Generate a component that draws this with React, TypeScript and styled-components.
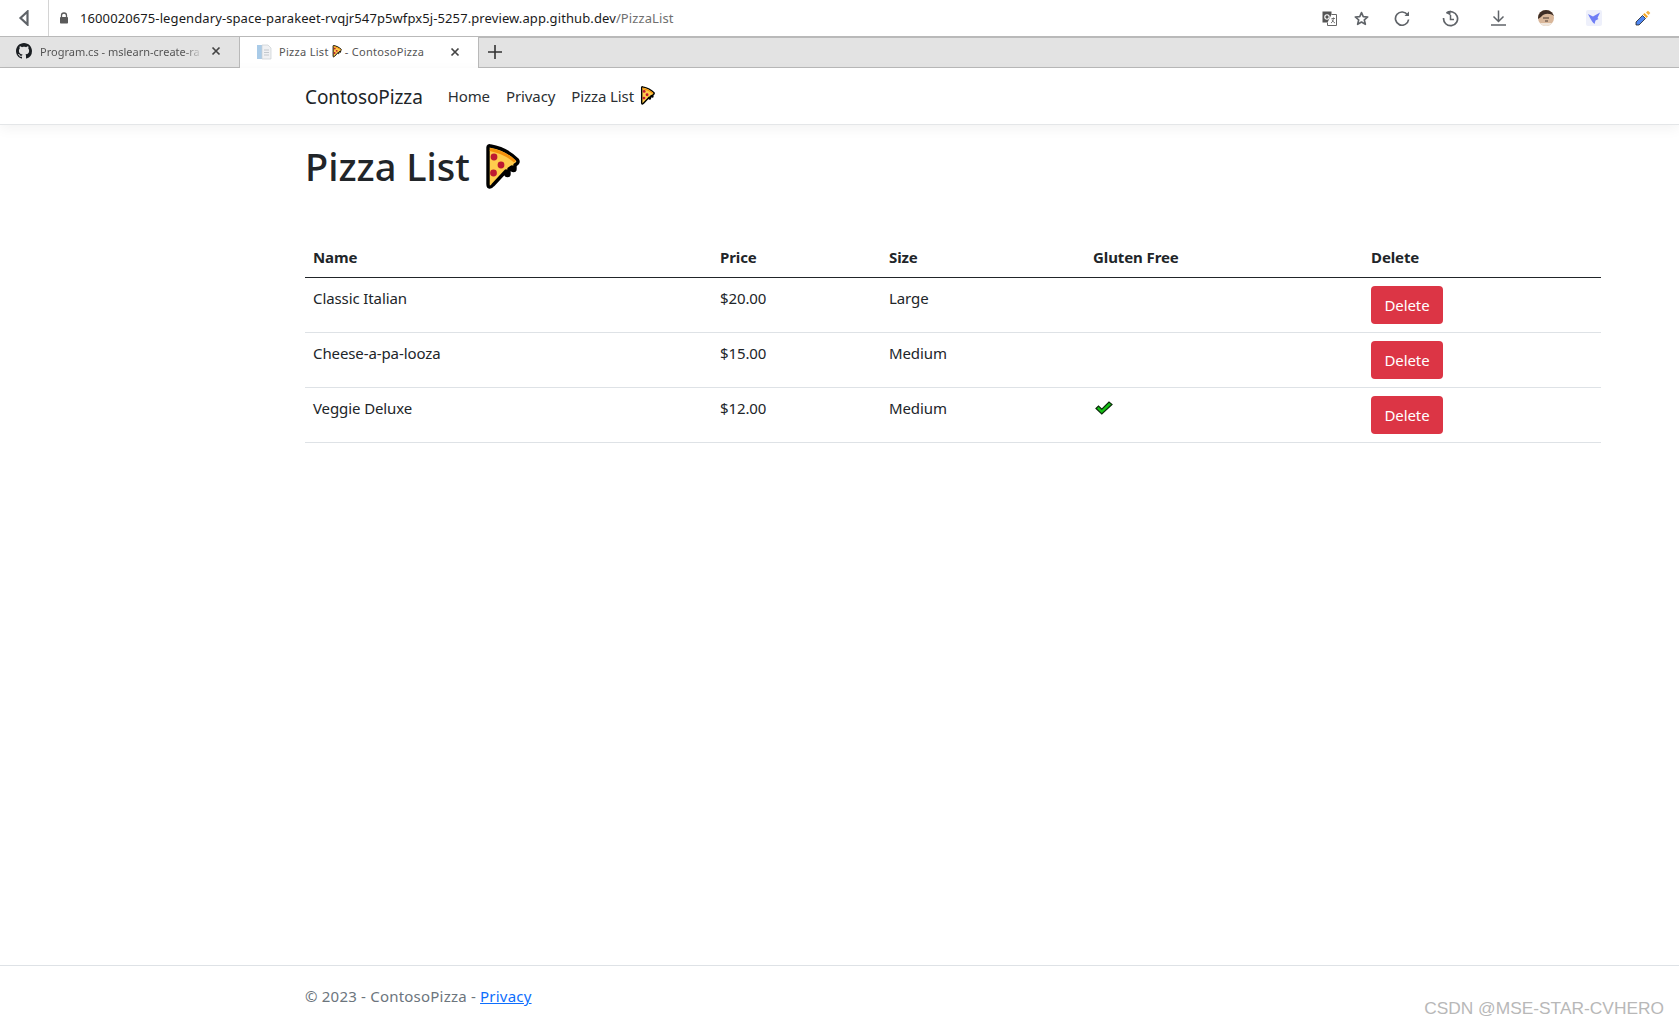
import React from "react";
import styled, { createGlobalStyle } from "styled-components";

const Global = createGlobalStyle`
  html, body { margin: 0; padding: 0; background: #fff; }
  body { font-family: "Noto Sans", "Open Sans", "Liberation Sans", sans-serif; color: #212529; }
  * { box-sizing: border-box; }
`;

const Page = styled.div`
  position: relative;
  display: flex;
  flex-direction: column;
  height: 1026px;
  overflow: hidden;
`;

const AddressBar = styled.div`
  display: flex;
  align-items: center;
  height: 36px;
  background: #fff;
`;
const BackCell = styled.div`
  width: 49px;
  height: 36px;
  display: flex;
  align-items: center;
  justify-content: center;
  border-right: 1px solid #d4d4d4;
  padding-right: 1px;
`;
const Lock = styled.div`
  display: flex;
  margin: 0 11px 0 10px;
`;
const Url = styled.div`
  flex: 1;
  font-size: 13px;
  letter-spacing: 0.1px;
  color: #1a1a1a;
  white-space: nowrap;
  span { color: #6f6f6f; }
`;
const ToolIcons = styled.div`
  display: flex;
  align-items: center;
  height: 36px;
`;
const ToolSlot = styled.div<{ $w: number }>`
  width: ${(p) => p.$w}px;
  display: flex;
  justify-content: center;
  align-items: center;
`;

const TabBar = styled.div`
  display: flex;
  align-items: stretch;
  height: 32px;
  background: #e3e3e3;
  border-top: 2px solid #b9b9b9;
  border-bottom: 1px solid #b9b9b9;
`;
const Tab = styled.div<{ $active?: boolean; $w: number }>`
  width: ${(p) => p.$w}px;
  display: flex;
  align-items: center;
  padding: 0 0 2px 16px;
  background: ${(p) => (p.$active ? "#fff" : "#e3e3e3")};
  border-right: 1px solid #b9b9b9;
  margin-bottom: ${(p) => (p.$active ? "-1px" : "0")};
  margin-top: -1px;
`;
const TabLabel = styled.div<{ $fade?: boolean }>`
  width: 163px;
  margin-left: ${(p) => (p.$fade ? 8 : 7)}px;
  font-size: 11px;
  letter-spacing: ${(p) => (p.$fade ? 0 : 0.3)}px;
  color: #555;
  white-space: nowrap;
  display: flex;
  align-items: center;
  gap: 3px;
  ${(p) => (p.$fade ? "mask-image: linear-gradient(90deg,#000 88%,transparent);" : "")}
`;
const TabClose = styled.div`
  margin-left: 8px;
  display: flex;
`;
const NewTab = styled.div`
  width: 32px;
  display: flex;
  align-items: center;
  justify-content: center;
  padding-bottom: 2px;
`;

const Nav = styled.nav`
  display: flex;
  align-items: center;
  height: 57px;
  padding-left: 305px;
  background: #fff;
  border-bottom: 1px solid #e4e6e8;
  box-shadow: 0 4px 12px rgba(0, 0, 0, 0.05);
`;
const Brand = styled.a`
  font-size: 19px;
  letter-spacing: -0.12px;
  color: #212529;
  margin-right: 25px;
  padding-top: 1px;
`;
const NavLink = styled.a`
  display: flex;
  align-items: center;
  font-size: 15px;
  letter-spacing: -0.1px;
  color: #2b2f33;
  margin-right: 16px;
  gap: 6px;
`;

const Main = styled.main`
  flex: 1;
  padding: 14px 78px 0 305px;
`;
const Title = styled.h1`
  display: flex;
  align-items: center;
  gap: 14px;
  margin: 0 0 44px;
  height: 54px;
  font-size: 38px;
  font-weight: 500;
  letter-spacing: 0;
  color: #212529;
  svg { margin-top: 2px; }
`;
const Table = styled.table`
  width: 1296px;
  border-collapse: collapse;
  table-layout: fixed;
`;
const Th = styled.th`
  padding: 8px;
  height: 40px;
  font-size: 15px;
  font-weight: 700;
  letter-spacing: -0.1px;
  line-height: 24px;
  text-align: left;
  color: #212529;
  border-bottom: 1px solid #212529;
`;
const Td = styled.td`
  padding: 8px;
  height: 55px;
  font-size: 15px;
  letter-spacing: -0.1px;
  line-height: 24px;
  vertical-align: top;
  color: #212529;
  border-bottom: 1px solid #dee2e6;
`;
const DeleteButton = styled.button`
  display: block;
  width: 72px;
  height: 38px;
  padding: 0;
  border: 0;
  border-radius: 4px;
  background: #dc3545;
  color: #fff;
  font-family: inherit;
  font-size: 15px;
  letter-spacing: -0.1px;
`;
const CheckWrap = styled.div`
  display: flex;
  height: 24px;
  align-items: center;
  padding-left: 2px;
`;

const Footer = styled.footer`
  height: 61px;
  padding: 18px 0 0 305px;
  border-top: 1px solid #dee2e6;
  font-size: 15px;
  letter-spacing: 0.21px;
  line-height: 24px;
  color: #6c757d;
  a { color: #0d6efd; text-decoration: underline; }
`;
const Watermark = styled.div`
  position: absolute;
  right: 15px;
  bottom: 7px;
  font-family: "Liberation Sans", sans-serif;
  font-size: 17.35px;
  color: #b8b8b8;
`;

const Pizza = ({ w }: { w: number }) => (
  <svg width={w} height={(w * 46) / 36} viewBox="0 0 36 46" style={{ flex: "none" }}>
    <path
      d="M4 3.5 C4 2 5 1.5 6.5 2 C17 4 27 9 33.5 16 C34.5 17.5 34 19 32.5 20 L31 21 L31 25 C31 27 28 27 28 25 L28 23 L25 25 L25 30 C25 32 22 32 22 30 L22 27 L9 41 C6.5 44 4 44 4 40 Z"
      fill="#ffcc4d"
      stroke="#000"
      strokeWidth="3.4"
      strokeLinejoin="round"
    />
    <path d="M6 5.5 C16 7.5 25 12 31 17.5" fill="none" stroke="#f4900c" strokeWidth="3" />
    <circle cx="10" cy="13" r="3.4" fill="#be1931" />
    <circle cx="17" cy="21" r="3.4" fill="#be1931" />
    <circle cx="9.5" cy="29" r="3.4" fill="#be1931" />
  </svg>
);

const Check = () => (
  <svg width="18" height="14" viewBox="0 0 18 14">
    <path d="M1 7.5 L3.5 5 L6.8 8.2 L14 1 L17 3.5 L6.8 13 Z" fill="#16c116" stroke="#0a2a0a" strokeWidth="1.2" strokeLinejoin="miter" />
  </svg>
);

const Close = () => (
  <svg width="10" height="10" viewBox="0 0 10 10">
    <path d="M1.5 1.5 L8.5 8.5 M8.5 1.5 L1.5 8.5" stroke="#444" strokeWidth="1.7" />
  </svg>
);

const GithubMark = () => (
  <svg width="16" height="16" viewBox="0 0 16 16">
    <path
      fill="#1b1f23"
      d="M8 0C3.58 0 0 3.58 0 8c0 3.54 2.29 6.53 5.47 7.59.4.07.55-.17.55-.38 0-.19-.01-.82-.01-1.49-2.01.37-2.53-.49-2.69-.94-.09-.23-.48-.94-.82-1.13-.28-.15-.68-.52-.01-.53.63-.01 1.08.58 1.23.82.72 1.21 1.87.87 2.33.66.07-.52.28-.87.51-1.07-1.78-.2-3.64-.89-3.64-3.95 0-.87.31-1.59.82-2.15-.08-.2-.36-1.02.08-2.12 0 0 .67-.21 2.2.82.64-.18 1.32-.27 2-.27s1.36.09 2 .27c1.53-1.04 2.2-.82 2.2-.82.44 1.1.16 1.92.08 2.12.51.56.82 1.27.82 2.15 0 3.07-1.87 3.75-3.65 3.95.29.25.54.73.54 1.48 0 1.07-.01 1.93-.01 2.2 0 .21.15.46.55.38A8.01 8.01 0 0 0 16 8c0-4.42-3.58-8-8-8z"
    />
  </svg>
);

const PageDoc = () => (
  <svg width="16" height="16" viewBox="0 0 16 16">
    <rect x="1" y="1" width="5" height="14" fill="#a9cbe8" />
    <path d="M6 1 H12 L15 4 V15 H6 Z" fill="#f0f1f3" stroke="#c9ced3" strokeWidth="0.7" />
    <path d="M8 6 H13 M8 8.5 H13 M8 11 H13" stroke="#c3c8cd" strokeWidth="1" />
  </svg>
);

const c = "#5f6368";

export default function App() {
  const rows = [
    { name: "Classic Italian", price: "$20.00", size: "Large", gf: false },
    { name: "Cheese-a-pa-looza", price: "$15.00", size: "Medium", gf: false },
    { name: "Veggie Deluxe", price: "$12.00", size: "Medium", gf: true },
  ];
  return (
    <Page>
      <Global />
      <AddressBar>
        <BackCell>
          <svg width="12" height="16" viewBox="0 0 12 16">
            <path d="M9.5 1.5 L2.5 8 L9.5 14.5 Z" fill="none" stroke={c} strokeWidth="2.2" strokeLinejoin="miter" />
          </svg>
        </BackCell>
        <Lock>
          <svg width="10" height="12" viewBox="0 0 10 12">
            <path d="M2.5 5 V3.5 a2.5 2.5 0 0 1 5 0 V5" fill="none" stroke="#5a5a5a" strokeWidth="1.3" />
            <rect x="1" y="5" width="8" height="6.5" rx="0.8" fill="#5a5a5a" />
          </svg>
        </Lock>
        <Url>
          1600020675-legendary-space-parakeet-rvqjr547p5wfpx5j-5257.preview.app.github.dev<span>/PizzaList</span>
        </Url>
        <ToolIcons>
          <ToolSlot $w={32}>
            <svg width="15" height="15" viewBox="0 0 15 15">
              <rect x="0.5" y="0.5" width="9" height="11" fill="#555" />
              <path d="M9.5 3.5 H14.5 V14.5 H5.5 V11.5" fill="#fff" stroke="#666" />
              <circle cx="5" cy="6" r="2.2" fill="none" stroke="#fff" strokeWidth="1.1" />
              <path d="M9.5 7.5 H13 M11.5 6.5 C11.5 9.5 10.5 11 9 12 M10 8.5 C10.5 10 11.5 11 13 12" stroke="#666" fill="none" strokeWidth="0.9" />
            </svg>
          </ToolSlot>
          <ToolSlot $w={33}>
            <svg width="15" height="15" viewBox="0 0 24 24">
              <path d="M12 2.5 L14.8 9 L22 9.6 L16.5 14.3 L18.2 21.3 L12 17.6 L5.8 21.3 L7.5 14.3 L2 9.6 L9.2 9 Z" fill="none" stroke={c} strokeWidth="2.6" strokeLinejoin="round" />
            </svg>
          </ToolSlot>
          <ToolSlot $w={48}>
            <svg width="16" height="16" viewBox="0 0 16 16">
              <path d="M13.6 5 A6.6 6.6 0 1 0 14.6 9.5" fill="none" stroke={c} strokeWidth="1.7" />
              <path d="M15 1.5 V6 H10.5 Z" fill={c} />
            </svg>
          </ToolSlot>
          <ToolSlot $w={48}>
            <svg width="17" height="17" viewBox="0 0 17 17">
              <path d="M4.5 3 A7 7 0 1 1 1.6 8" fill="none" stroke={c} strokeWidth="1.7" />
              <path d="M8.5 0.5 L8.5 5.5 L4 3 Z" fill={c} />
              <path d="M8.5 5 V9.5 H12" fill="none" stroke={c} strokeWidth="1.5" />
            </svg>
          </ToolSlot>
          <ToolSlot $w={48}>
            <svg width="15" height="16" viewBox="0 0 15 16">
              <path d="M7.5 0.5 V11 M2.5 6.5 L7.5 11.5 L12.5 6.5" fill="none" stroke={c} strokeWidth="1.5" />
              <path d="M0 15 H15" stroke={c} strokeWidth="1.5" />
            </svg>
          </ToolSlot>
          <ToolSlot $w={48}>
            <svg width="16" height="16" viewBox="0 0 16 16">
              <defs>
                <clipPath id="av"><circle cx="8" cy="8" r="8" /></clipPath>
              </defs>
              <g clipPath="url(#av)">
                <rect width="16" height="16" fill="#d9b79a" />
                <path d="M0 0 H16 V6 C12 3 6 3 3 7 L0 9 Z" fill="#3e2e26" />
                <path d="M5 8 H11 M7 11 H10" stroke="#4a3a30" strokeWidth="1.2" />
                <rect y="13" width="16" height="3" fill="#efe6dc" />
              </g>
            </svg>
          </ToolSlot>
          <ToolSlot $w={48}>
            <svg width="16" height="16" viewBox="0 0 16 16">
              <rect width="16" height="16" rx="2" fill="#eef0fb" />
              <path d="M2 4 L7 6.5 L14 2.5 L11.5 8 L12.5 9 L9.5 10.5 L8.5 14 C6 12 4 8 2 4 Z" fill="#6f7ef5" />
            </svg>
          </ToolSlot>
          <ToolSlot $w={49}>
            <svg width="16" height="16" viewBox="0 0 16 16">
              <path d="M9.5 3 L13 6.5 L11.5 8 L8 4.5 Z" fill="#f5a623" />
              <path d="M11 2.5 L13 0.8 L15.3 3 L13.5 5 Z" fill="#f5b341" />
              <path d="M7.5 5.5 L10.5 8.5 L4 15 L1 15 L1 12 Z" fill="#4f86f0" stroke="#222" strokeWidth="0.8" />
            </svg>
          </ToolSlot>
          <ToolSlot $w={12} />
        </ToolIcons>
      </AddressBar>

      <TabBar>
        <Tab $w={240}>
          <GithubMark />
          <TabLabel $fade>Program.cs - mslearn-create-ra</TabLabel>
          <TabClose><Close /></TabClose>
        </Tab>
        <Tab $active $w={239}>
          <PageDoc />
          <TabLabel>
            Pizza List <Pizza w={10} /> - ContosoPizza
          </TabLabel>
          <TabClose><Close /></TabClose>
        </Tab>
        <NewTab>
          <svg width="14" height="14" viewBox="0 0 14 14">
            <path d="M7 0 V14 M0 7 H14" stroke="#333" strokeWidth="1.6" />
          </svg>
        </NewTab>
      </TabBar>

      <Nav>
        <Brand>ContosoPizza</Brand>
        <NavLink>Home</NavLink>
        <NavLink>Privacy</NavLink>
        <NavLink>
          Pizza List <Pizza w={15} />
        </NavLink>
      </Nav>

      <Main>
        <Title>
          Pizza List <Pizza w={36} />
        </Title>
        <Table>
          <colgroup>
            <col width={407} />
            <col width={169} />
            <col width={204} />
            <col width={278} />
            <col width={238} />
          </colgroup>
          <thead>
            <tr>
              <Th>Name</Th>
              <Th>Price</Th>
              <Th>Size</Th>
              <Th>Gluten Free</Th>
              <Th>Delete</Th>
            </tr>
          </thead>
          <tbody>
            {rows.map((r) => (
              <tr key={r.name}>
                <Td>{r.name}</Td>
                <Td>{r.price}</Td>
                <Td>{r.size}</Td>
                <Td>{r.gf && <CheckWrap><Check /></CheckWrap>}</Td>
                <Td><DeleteButton>Delete</DeleteButton></Td>
              </tr>
            ))}
          </tbody>
        </Table>
      </Main>

      <Footer>
        © 2023 - ContosoPizza - <a>Privacy</a>
      </Footer>
      <Watermark>CSDN @MSE-STAR-CVHERO</Watermark>
    </Page>
  );
}
